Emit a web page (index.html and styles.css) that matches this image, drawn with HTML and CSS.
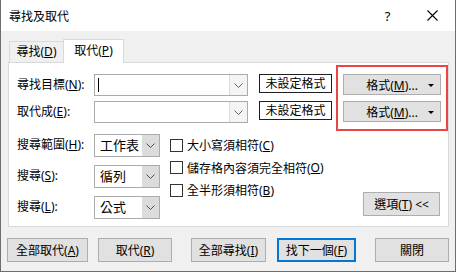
FILE: index.html
```html
<!DOCTYPE html>
<html lang="zh-TW">
<head>
  <meta charset="UTF-8" />
  <title>尋找及取代</title>
  <link rel="stylesheet" href="styles.css">
</head>
<body>
  <div class="window">
    <div class="titlebar">
      <span class="title">尋找及取代</span>
      <span class="tb-btn">?</span>
      <span class="tb-btn">
        <svg width="11" height="11" viewBox="0 0 11 11"><path d="M0.5 0.5 L10.5 10.5 M10.5 0.5 L0.5 10.5" stroke="#000" stroke-width="1.1" fill="none"/></svg>
      </span>
    </div>

    <div class="client">
      <div class="tabs">
        <div class="tab">尋找(<u>D</u>)</div>
        <div class="tab active">取代(<u>P</u>)</div>
      </div>

      <div class="panel">
        <!-- 尋找 / 取代 欄位 -->
        <div class="row">
          <label class="lbl">尋找目標(<u>N</u>):</label>
          <div class="combo">
            <span class="caret"></span>
            <span class="drop"><svg width="9" height="5" viewBox="0 0 9 5"><polyline points="0.5,0.5 4.5,4.5 8.5,0.5" stroke="#606060" fill="none"/></svg></span>
          </div>
          <div class="preview">未設定格式</div>
          <button class="btn fmt">格式(<u>M</u>)...</button>
        </div>
        <div class="row">
          <label class="lbl">取代成(<u>E</u>):</label>
          <div class="combo">
            <span class="drop"><svg width="9" height="5" viewBox="0 0 9 5"><polyline points="0.5,0.5 4.5,4.5 8.5,0.5" stroke="#606060" fill="none"/></svg></span>
          </div>
          <div class="preview">未設定格式</div>
          <button class="btn fmt">格式(<u>M</u>)...</button>
        </div>
        <div class="highlight"></div>

        <div class="options">
          <div class="selects">
            <div class="srow">
              <label class="lbl">搜尋範圍(<u>H</u>):</label>
              <div class="select"><span class="val">工作表</span><span class="sdrop"><svg width="9" height="5" viewBox="0 0 9 5"><polyline points="0.5,0.5 4.5,4.5 8.5,0.5" stroke="#505050" fill="none"/></svg></span></div>
            </div>
            <div class="srow">
              <label class="lbl">搜尋(<u>S</u>):</label>
              <div class="select"><span class="val">循列</span><span class="sdrop"><svg width="9" height="5" viewBox="0 0 9 5"><polyline points="0.5,0.5 4.5,4.5 8.5,0.5" stroke="#505050" fill="none"/></svg></span></div>
            </div>
            <div class="srow">
              <label class="lbl">搜尋(<u>L</u>):</label>
              <div class="select"><span class="val">公式</span><span class="sdrop"><svg width="9" height="5" viewBox="0 0 9 5"><polyline points="0.5,0.5 4.5,4.5 8.5,0.5" stroke="#505050" fill="none"/></svg></span></div>
            </div>
          </div>

          <div class="checks">
            <div class="crow"><span class="box"></span>大小寫須相符(<u>C</u>)</div>
            <div class="crow"><span class="box"></span>儲存格內容須完全相符(<u>O</u>)</div>
            <div class="crow"><span class="box"></span>全半形須相符(<u>B</u>)</div>
          </div>

          <button class="btn opts">選項(<u>T</u>) &lt;&lt;</button>
        </div>
      </div>

      <div class="actions">
        <button class="btn a1">全部取代(<u>A</u>)</button>
        <button class="btn a2">取代(<u>R</u>)</button>
        <button class="btn a3">全部尋找(<u>I</u>)</button>
        <button class="btn a4 default">找下一個(<u>F</u>)</button>
        <button class="btn a5">關閉</button>
      </div>
    </div>
  </div>
</body>
</html>
```

FILE: styles.css
```css
* {
  box-sizing: border-box;
}

body {
  margin: 0;
  background: #fff;
  font-family: "Noto Sans", "Noto Sans CJK TC", sans-serif;
  font-size: 12px;
  color: #000;
}

u {
  text-decoration: underline;
  text-underline-offset: 1px;
}

.window {
  width: 456px;
  height: 272px;
  border: 1px solid #6e6e6e;
  border-top: none;
  background: #f0f0f0;
  display: flex;
  flex-direction: column;
}

.titlebar {
  height: 31px;
  background: #fff;
  display: flex;
  align-items: center;
  padding-left: 8px;
  flex-shrink: 0;
}

.title {
  flex: 1;
  font-size: 12px;
}

.tb-btn {
  width: 45px;
  height: 31px;
  display: flex;
  align-items: center;
  justify-content: center;
  font-size: 13px;
}

.client {
  padding-left: 6px;
  flex: 1;
}

.tabs {
  display: flex;
  align-items: flex-end;
  margin: 8px 0 0 2px;
  height: 23px;
  position: relative;
  z-index: 1;
}

.tab {
  height: 21px;
  width: 55px;
  padding: 0;
  border: 1px solid #d9d9d9;
  border-bottom: none;
  line-height: 19px;
  text-align: center;
  white-space: nowrap;
}

.tab.active {
  height: 24px;
  width: 61px;
  margin-left: -1px;
  margin-bottom: -1px;
  background: #fff;
  line-height: 21px;
}

.panel {
  position: relative;
  margin-left: 1px;
  width: 441px;
  height: 165px;
  border: 1px solid #d9d9d9;
  background: #fff;
  padding: 11px 0 0 8px;
}

.row {
  display: flex;
  align-items: flex-start;
  height: 22px;
}

.row + .row {
  margin-top: 5px;
}

.lbl {
  width: 77px;
  line-height: 22px;
  flex-shrink: 0;
  white-space: nowrap;
}

.combo {
  width: 154px;
  height: 22px;
  border: 1px solid #ababab;
  display: flex;
  align-items: center;
  justify-content: space-between;
  padding-left: 3px;
}

.caret {
  width: 1px;
  height: 14px;
  background: #000;
}

.drop {
  margin-left: auto;
  width: 18px;
  height: 20px;
  border-left: 1px solid #dadada;
  background: #f4f4f4;
  display: flex;
  align-items: center;
  justify-content: center;
}

.preview {
  margin-left: 11px;
  width: 73px;
  height: 19px;
  border: 1px solid #1e1e1e;
  text-align: center;
  line-height: 17px;
  white-space: nowrap;
}

.btn {
  font-family: inherit;
  font-size: 12px;
  color: #000;
  background: #e1e1e1;
  border: 1px solid #adadad;
  padding: 0;
  margin: 0;
  text-align: center;
  white-space: nowrap;
}

.fmt {
  position: relative;
  margin-left: 11px;
  width: 98px;
  height: 21px;
}

.fmt::after {
  content: "";
  position: absolute;
  right: 6px;
  top: 9px;
  border-left: 3px solid transparent;
  border-right: 3px solid transparent;
  border-top: 3px solid #000;
}

.highlight {
  position: absolute;
  left: 327px;
  top: 2px;
  width: 112px;
  height: 66px;
  border: 2px solid #ec4545;
}

.options {
  display: flex;
  align-items: flex-start;
  margin-top: 11px;
}

.srow {
  display: flex;
  height: 22px;
}

.srow + .srow {
  margin-top: 9px;
}

.select {
  width: 66px;
  height: 23px;
  border: 1px solid #acacac;
  display: flex;
  align-items: stretch;
}

.val {
  flex: 1;
  padding-left: 5px;
  line-height: 21px;
  font-size: 13px;
}

.sdrop {
  width: 17px;
  background: #dcdcdc;
  display: flex;
  align-items: center;
  justify-content: center;
}

.checks {
  margin-left: 10px;
  width: 193px;
}

.crow {
  display: flex;
  align-items: center;
  height: 22.5px;
  white-space: nowrap;
}

.box {
  width: 13px;
  height: 13px;
  border: 1px solid #333;
  background: #fff;
  margin-right: 4px;
  flex-shrink: 0;
}

.opts {
  align-self: flex-end;
  margin-bottom: 2px;
  width: 77px;
  height: 24px;
}

.actions {
  display: flex;
  margin-top: 11px;
  height: 24px;
}

.actions .btn {
  height: 24px;
}

.a1 { width: 81px; }
.a2 { width: 74px; margin-left: 10px; }
.a3 { width: 75px; margin-left: 19px; }
.a4 { width: 79px; margin-left: 11px; }
.a5 { width: 74px; margin-left: 19px; }

.default {
  border: 2px solid #0078d7;
}
```
